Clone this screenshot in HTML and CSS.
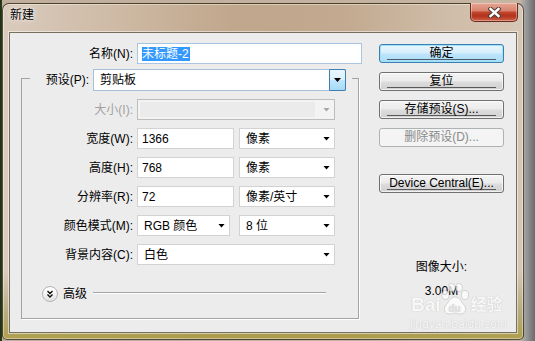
FILE: index.html
```html
<!DOCTYPE html>
<html lang="zh-CN">
<head>
    <meta charset="UTF-8">
    <title>新建</title>
    <link rel="stylesheet" href="styles.css">
</head>
<body>
    <div class="window">
        <div class="titlebar">
            <span class="title">新建</span>
            <button class="close" aria-label="关闭">
                <svg width="13" height="11" viewBox="0 0 13 11">
                    <path d="M2.5 2 L10.5 9 M10.5 2 L2.5 9" stroke="#4e3a36" stroke-width="4.4" stroke-linecap="square" fill="none"/>
                    <path d="M2.5 2 L10.5 9 M10.5 2 L2.5 9" stroke="#fff" stroke-width="2.4" stroke-linecap="square" fill="none"/>
                </svg>
            </button>
        </div>
        <div class="client">
            <div class="form">
                <div class="row name-row">
                    <label class="lbl">名称(N):</label>
                    <div class="textbox name-box"><span class="sel">未标题-2</span></div>
                </div>
                <div class="group">
                    <div class="legend">
                        <label class="lbl">预设(P):</label>
                        <div class="combo preset">
                            <span class="val">剪贴板</span>
                            <span class="drop"><i class="arrow"></i></span>
                        </div>
                    </div>
                    <div class="row">
                        <label class="lbl off">大小(I):</label>
                        <div class="combo disabled w-wide"><span class="well"></span><i class="arrow"></i></div>
                    </div>
                    <div class="row">
                        <label class="lbl">宽度(W):</label>
                        <div class="textbox w-num">1366</div>
                        <div class="combo w-unit"><span class="val">像素</span><i class="arrow"></i></div>
                    </div>
                    <div class="row">
                        <label class="lbl">高度(H):</label>
                        <div class="textbox w-num">768</div>
                        <div class="combo w-unit"><span class="val">像素</span><i class="arrow"></i></div>
                    </div>
                    <div class="row">
                        <label class="lbl">分辨率(R):</label>
                        <div class="textbox w-num">72</div>
                        <div class="combo w-unit"><span class="val">像素/英寸</span><i class="arrow"></i></div>
                    </div>
                    <div class="row">
                        <label class="lbl">颜色模式(M):</label>
                        <div class="combo w-mode"><span class="val">RGB 颜色</span><i class="arrow"></i></div>
                        <div class="combo w-bits"><span class="val">8 位</span><i class="arrow"></i></div>
                    </div>
                    <div class="row">
                        <label class="lbl">背景内容(C):</label>
                        <div class="combo w-wide"><span class="val">白色</span><i class="arrow"></i></div>
                    </div>
                    <div class="advanced">
                        <span class="adv-btn">
                            <svg width="14" height="14" viewBox="0 0 14 14">
                                <path d="M4.5 4 L7 6.5 L9.5 4 M4.5 7.5 L7 10 L9.5 7.5" stroke="#111" stroke-width="1.4" fill="none"/>
                            </svg>
                        </span>
                        <span class="adv-text">高级</span>
                        <span class="adv-line"></span>
                    </div>
                </div>
            </div>
            <div class="actions">
                <button class="btn default">确定</button>
                <button class="btn">复位</button>
                <button class="btn">存储预设(S)...</button>
                <button class="btn" disabled>删除预设(D)...</button>
                <button class="btn device">Device Central(E)...</button>
                <div class="info">图像大小:</div>
                <div class="info size">3.00M</div>
            </div>

            <div class="watermark">
                <div class="wm-logo">
                    <span class="wm-bai">Bai</span>
                    <svg width="28" height="32" viewBox="0 0 28 32">
                        <g fill="rgba(255,255,255,0.75)" stroke="rgba(0,0,0,0.13)" stroke-width="1">
                            <ellipse cx="4.5" cy="12" rx="3.5" ry="4.5"/>
                            <ellipse cx="10.5" cy="4.5" rx="3.5" ry="4"/>
                            <ellipse cx="18" cy="4.5" rx="3.5" ry="4"/>
                            <ellipse cx="24" cy="12" rx="3.5" ry="4.5"/>
                            <path d="M14 14 C9 14 8 19 5 22 C2 25 3 31 9 31 C12 31 13 30 14 30 C15 30 16 31 19 31 C25 31 26 25 23 22 C20 19 19 14 14 14 Z"/>
                        </g>
                        <text x="7.5" y="28.5" font-family="Liberation Sans, sans-serif" font-weight="bold" font-size="10" fill="#e4e4e4">du</text>
                    </svg>
                    <span class="wm-cn">经验</span>
                </div>
                <div class="wm-url">jingyan.baidu.com</div>
            </div>
        </div>
    </div>
</body>
</html>
```

FILE: styles.css
```css
body {
    margin: 0;
    width: 535px;
    height: 341px;
    overflow: hidden;
    font-family: "Liberation Sans", "Noto Sans CJK SC", sans-serif;
    font-size: 12px;
    color: #000;
    background: linear-gradient(to right, #1c2f12 0, #2b3e1a 2px, #bfae9d 2px, #c6b5a3 520px, #a4a4a4 524px, #6c6c6c 535px);
}
.window {
    margin: 3px 0 0 2px;
    width: 522px;
    height: 337px;
    box-sizing: border-box;
    border: 1px solid rgba(45, 35, 25, 0.75);
    border-radius: 7px 7px 5px 5px;
    padding: 0 6px 6px;
    display: flex;
    flex-direction: column;
    background:
        linear-gradient(to bottom, rgba(0,0,0,0) 0, rgba(0,0,0,0) 80%, rgba(150,145,70,0.55) 93%, rgba(170,155,65,0.9) 100%),
        linear-gradient(to right, #d9cbbd 0, #cfbba7 20%, #c0a68b 45%, #c2a98f 65%, #cfbca8 85%, #d6c6b5 100%);
    box-shadow: inset 0 0 0 1px rgba(255,255,255,0.4);
}
.titlebar {
    height: 28px;
    display: flex;
    justify-content: space-between;
    align-items: flex-start;
}
.title {
    margin: 3px 0 0 1px;
    line-height: 16px;
    text-shadow: 0 0 6px rgba(255,255,255,0.9), 0 0 2px rgba(255,255,255,0.8);
}
.close {
    width: 48px;
    height: 19px;
    margin: -1px -1px 0 0;
    padding: 0;
    border: 1px solid #6a2b1f;
    border-top: none;
    border-radius: 0 0 5px 5px;
    background: linear-gradient(to bottom, #e7a594 0, #d98570 42%, #c2462d 52%, #b2321c 72%, #cf6247 100%);
    box-shadow: inset 0 0 0 1px rgba(255,255,255,0.35);
    display: flex;
    align-items: center;
    justify-content: center;
}
.client {
    flex: 1;
    position: relative;
    display: flex;
    background: #ececec;
    border: 1px solid #766f5f;
    box-shadow: 0 0 0 1px rgba(255,255,255,0.5);
}

/* left side */
.form {
    width: 352px;
}
.row {
    display: flex;
    align-items: center;
    gap: 4px;
    height: 21px;
}
.lbl {
    text-align: right;
    white-space: nowrap;
    line-height: 16px;
}
.lbl.off {
    color: #a2a2a2;
}
.name-row {
    margin-top: 10px;
}
.name-row .lbl {
    width: 123px;
}
.textbox,
.combo {
    height: 21px;
    box-sizing: border-box;
    background: #fff;
    border: 1px solid #d2d2d2;
    display: flex;
    align-items: center;
    line-height: 16px;
    white-space: nowrap;
}
.textbox {
    padding-left: 4px;
}
.combo {
    padding: 0 4px 0 6px;
}
.combo .val {
    flex: 1;
}
.arrow {
    width: 7px;
    height: 4px;
    background: #000;
    clip-path: polygon(0 0, 100% 0, 50% 100%);
    margin-left: auto;
}
.name-box {
    width: 225px;
    border-color: #a9c5e4;
}
.sel {
    background: #3399ff;
    color: #fff;
    line-height: 14px;
    padding-right: 1px;
}

.group {
    margin: 14px 0 0 11px;
    width: 338px;
    height: 241px;
    box-sizing: border-box;
    border: 1px solid #a4a4a4;
    box-shadow: 1px 1px 0 #fff;
}
.group .row {
    margin-top: 8px;
}
.group .lbl {
    width: 111px;
}
.legend {
    display: flex;
    align-items: center;
    gap: 4px;
    margin: -10px 0 0 8px;
    width: 322px;
    height: 22px;
    padding-right: 6px;
    box-sizing: border-box;
    background: #ececec;
}
.legend .lbl {
    width: 59px;
}
.preset {
    width: 253px;
    height: 22px;
    padding-right: 0;
    border-color: #a7bfd9;
}
.drop {
    width: 17px;
    height: 22px;
    margin: -1px -1px -1px 0;
    box-sizing: border-box;
    border: 1px solid #3c7fb1;
    border-radius: 0 2px 2px 0;
    background: linear-gradient(to bottom, #eaf6fd 0, #d9f0fc 48%, #bee6fd 52%, #a7d9f5 100%);
    display: flex;
    align-items: center;
    justify-content: center;
}
.drop .arrow {
    margin: 0;
}
.disabled {
    background: #f3f3f3;
    border-color: #bdbdbd;
    padding-left: 2px;
}
.disabled .well {
    flex: 1;
    height: 15px;
    background: #ebebeb;
    margin-right: 8px;
}
.disabled .arrow {
    background: #a6a6a6;
}
.w-wide {
    width: 198px;
}
.w-num {
    width: 97px;
}
.w-unit {
    width: 96px;
    margin-left: 1px;
}
.w-mode {
    width: 93px;
}
.w-bits {
    width: 96px;
    margin-left: 5px;
}
.advanced {
    display: flex;
    align-items: center;
    margin: 21px 0 0 20px;
    height: 16px;
}
.adv-btn {
    width: 16px;
    height: 16px;
    box-sizing: border-box;
    border: 1px solid #b3b3b3;
    border-radius: 50%;
    background: linear-gradient(to bottom, #ffffff 0, #f4f4f4 50%, #e2e2e2 100%);
    display: flex;
    align-items: center;
    justify-content: center;
}
.adv-text {
    margin-left: 5px;
    line-height: 16px;
}
.adv-line {
    width: 233px;
    margin: -3px 0 0 6px;
    border-top: 1px solid #a2a2a2;
    border-bottom: 1px solid #fff;
}

/* right side */
.actions {
    margin-left: 17px;
    width: 125px;
    display: flex;
    flex-direction: column;
}
.btn {
    height: 19px;
    margin-top: 9px;
    padding: 0;
    font-family: inherit;
    font-size: 12px;
    color: #000;
    border: 1px solid #707070;
    border-radius: 3px;
    background:
        linear-gradient(#5a5a5a, #5a5a5a) no-repeat center bottom 2px / calc(100% - 14px) 1px,
        linear-gradient(to bottom, #f4f4f4 0, #ebebeb 48%, #dddddd 52%, #cfcfcf 100%);
    box-shadow: inset 0 0 0 1px rgba(255,255,255,0.7);
    line-height: 15px;
}
.btn:first-child {
    margin-top: 11px;
}
.btn.default {
    border-color: #3c7fb1;
    background:
        linear-gradient(#4b5e6c, #4b5e6c) no-repeat center bottom 2px / calc(100% - 14px) 1px,
        linear-gradient(to bottom, #e8f6fd 0, #d6effc 48%, #bde5fb 52%, #a9dbf6 100%);
    box-shadow: inset 0 0 0 1px #9fe0fb;
}
.btn:disabled {
    color: #8a8a8a;
    border-color: #adb2b5;
    background: #f4f4f4;
    box-shadow: none;
}
.btn.device {
    margin-top: 27px;
}
.info {
    text-align: center;
    line-height: 16px;
    margin-top: 66px;
}
.info.size {
    margin-top: 8px;
}

/* watermark over the dialog */
.watermark {
    position: absolute;
    left: 399px;
    top: 250px;
    color: rgba(255,255,255,0.92);
    text-shadow: 0 0 1px rgba(0,0,0,0.25);
}
.wm-logo {
    display: flex;
    align-items: flex-end;
    height: 32px;
}
.wm-bai {
    font-size: 19px;
    font-weight: bold;
    line-height: 20px;
    margin-left: 2px;
}
.wm-cn {
    font-size: 16px;
    font-weight: bold;
    line-height: 20px;
    margin-left: 2px;
}
.wm-url {
    font-size: 12px;
    line-height: 14px;
    margin: 2px 0 0 1px;
}
```
